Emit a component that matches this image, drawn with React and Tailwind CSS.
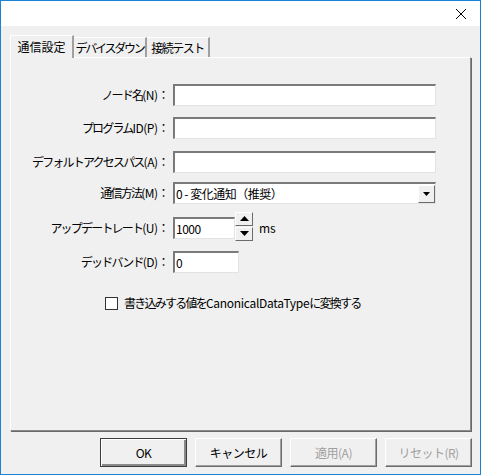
import React from 'react'

const font = { fontFamily: '"Meiryo UI", "Noto Sans CJK JP", "Noto Sans", sans-serif' };

const sunken =
  'bg-white border-t-2 border-l-2 border-t-[#7a7a7a] border-l-[#7a7a7a] border-b border-r border-b-[#e3e3e3] border-r-[#e3e3e3]';
const raised =
  'bg-[#f0f0f0] border border-t-white border-l-white border-b-[#6b6b6b] border-r-[#6b6b6b]';

function Label({ jp, suffix }) {
  return (
    <div className="w-[158px] text-right whitespace-nowrap text-[12px] text-black">
      <span className="tracking-[-1.8px]">{jp}</span>
      <span className="tracking-[-0.5px]">{suffix}</span>
    </div>
  );
}

function Field({ jp, suffix, width = 'w-[263px]', top, value = '' }) {
  return (
    <div className={`flex items-center h-[22px] ${top}`}>
      <Label jp={jp} suffix={suffix} />
      <div className={`ml-[4px] h-[22px] ${width} ${sunken} flex items-center pl-[1px] text-[12px]`}>
        {value}
      </div>
    </div>
  );
}

function Btn({ children, disabled, primary }) {
  return (
    <div
      className={`w-[87px] h-[29px] flex items-center justify-center text-[12px] tracking-[-0.5px] bg-[#f0f0f0] ${
        primary
          ? 'border border-[#3c3c3c] shadow-[inset_1px_1px_0_#ffffff,inset_-2px_-2px_0_#8a8a8a]'
          : 'border border-t-white border-l-white border-b-[#6b6b6b] border-r-[#6b6b6b] shadow-[inset_-1px_-1px_0_#a0a0a0]'
      } ${disabled ? 'text-[#a0a0a0]' : 'text-black'}`}
    >
      {children}
    </div>
  );
}

export default function App() {
  return (
    <div className="w-[481px] h-[475px] border border-[#1883d7] bg-[#f0f0f0] flex flex-col overflow-hidden leading-[16px]" style={font}>
      {/* title bar */}
      <div className="h-[25px] bg-white flex justify-end items-center pr-[13px] shrink-0">
        <svg width="12" height="12" viewBox="0 0 12 12">
          <path d="M1 1L11 11M11 1L1 11" stroke="#000" strokeWidth="1" />
        </svg>
      </div>

      {/* tabs */}
      <div className="flex items-end pl-[9px] pt-[8px] h-[31px] shrink-0">
        <div className="h-[23px] w-[64px] border-t border-l border-white border-r-2 border-r-[#a0a0a0] bg-[#f0f0f0] flex items-start justify-center pt-[3px] text-[12px] relative z-10 -mb-[1px] whitespace-nowrap">
          通信設定
        </div>
        <div className="h-[20px] w-[73px] border-t border-white border-r-2 border-r-[#a0a0a0] flex items-center justify-center text-[12px] tracking-[-2.2px] whitespace-nowrap">
          デバイスダウン
        </div>
        <div className="h-[20px] w-[63px] border-t border-white border-r-2 border-r-[#a0a0a0] flex items-center justify-center text-[12px] tracking-[-1.5px] whitespace-nowrap">
          接続テスト
        </div>
      </div>

      {/* panel */}
      <div className="mx-[9px] h-[374px] border-t border-l border-white border-r border-b border-r-[#8a8a8a] border-b-[#8a8a8a] shadow-[1px_1px_0_#696969] shrink-0">
        <div className="pt-[26px]">
          <Field jp="ノード名" suffix="(N)：" top="" />
          <Field jp="プログラム" suffix="ID(P)：" top="mt-[11px]" />
          <Field jp="デフォルトアクセスパス" suffix="(A)：" top="mt-[12px]" />

          <div className="flex items-center h-[22px] mt-[9px]">
            <Label jp="通信方法" suffix="(M)：" />
            <div className={`ml-[4px] h-[22px] w-[263px] ${sunken} flex items-center text-[12px]`}>
              <span className="pl-[1px] flex-1 whitespace-nowrap tracking-[-0.5px]">0 - 変化通知（推奨）</span>
              <div className={`w-[17px] h-[18px] ${raised} flex items-center justify-center`}>
                <svg width="7" height="4" viewBox="0 0 7 4"><path d="M0 0H7L3.5 4Z" fill="#000" /></svg>
              </div>
            </div>
          </div>

          <div className="flex items-center h-[22px] mt-[13px]">
            <Label jp="アップデートレート" suffix="(U)：" />
            <div className={`ml-[4px] h-[22px] w-[62px] ${sunken} flex items-center pl-[1px] text-[12px] tracking-[-0.5px]`}>
              1000
            </div>
            <div className="flex flex-col -mt-[4px] gap-[1px]">
              <div className={`w-[18px] h-[14px] ${raised} flex items-center justify-center`}>
                <svg width="9" height="5" viewBox="0 0 9 5"><path d="M0 5H9L4.5 0Z" fill="#000" /></svg>
              </div>
              <div className={`w-[18px] h-[14px] ${raised} flex items-center justify-center`}>
                <svg width="9" height="5" viewBox="0 0 9 5"><path d="M0 0H9L4.5 5Z" fill="#000" /></svg>
              </div>
            </div>
            <span className="ml-[6px] text-[12px]">ms</span>
          </div>

          <Field jp="デッドバンド" suffix="(D)：" width="w-[66px]" top="mt-[12px]" value="0" />

          <div className="flex items-center mt-[22px] pl-[94px]">
            <div className="w-[13px] h-[13px] bg-white border border-[#333] shrink-0" />
            <span className="ml-[6px] text-[12px] whitespace-nowrap">
              <span className="tracking-[-1.75px]">書き込みする値を</span>
              <span className="tracking-[-0.3px]">CanonicalDataType</span>
              <span className="tracking-[-1.75px]">に変換する</span>
            </span>
          </div>
        </div>
      </div>

      {/* buttons */}
      <div className="flex justify-end gap-[8px] pr-[8px] mt-[7px]">
        <Btn primary>OK</Btn>
        <Btn>キャンセル</Btn>
        <Btn disabled>適用(A)</Btn>
        <Btn disabled>リセット(R)</Btn>
      </div>
    </div>
  );
}
